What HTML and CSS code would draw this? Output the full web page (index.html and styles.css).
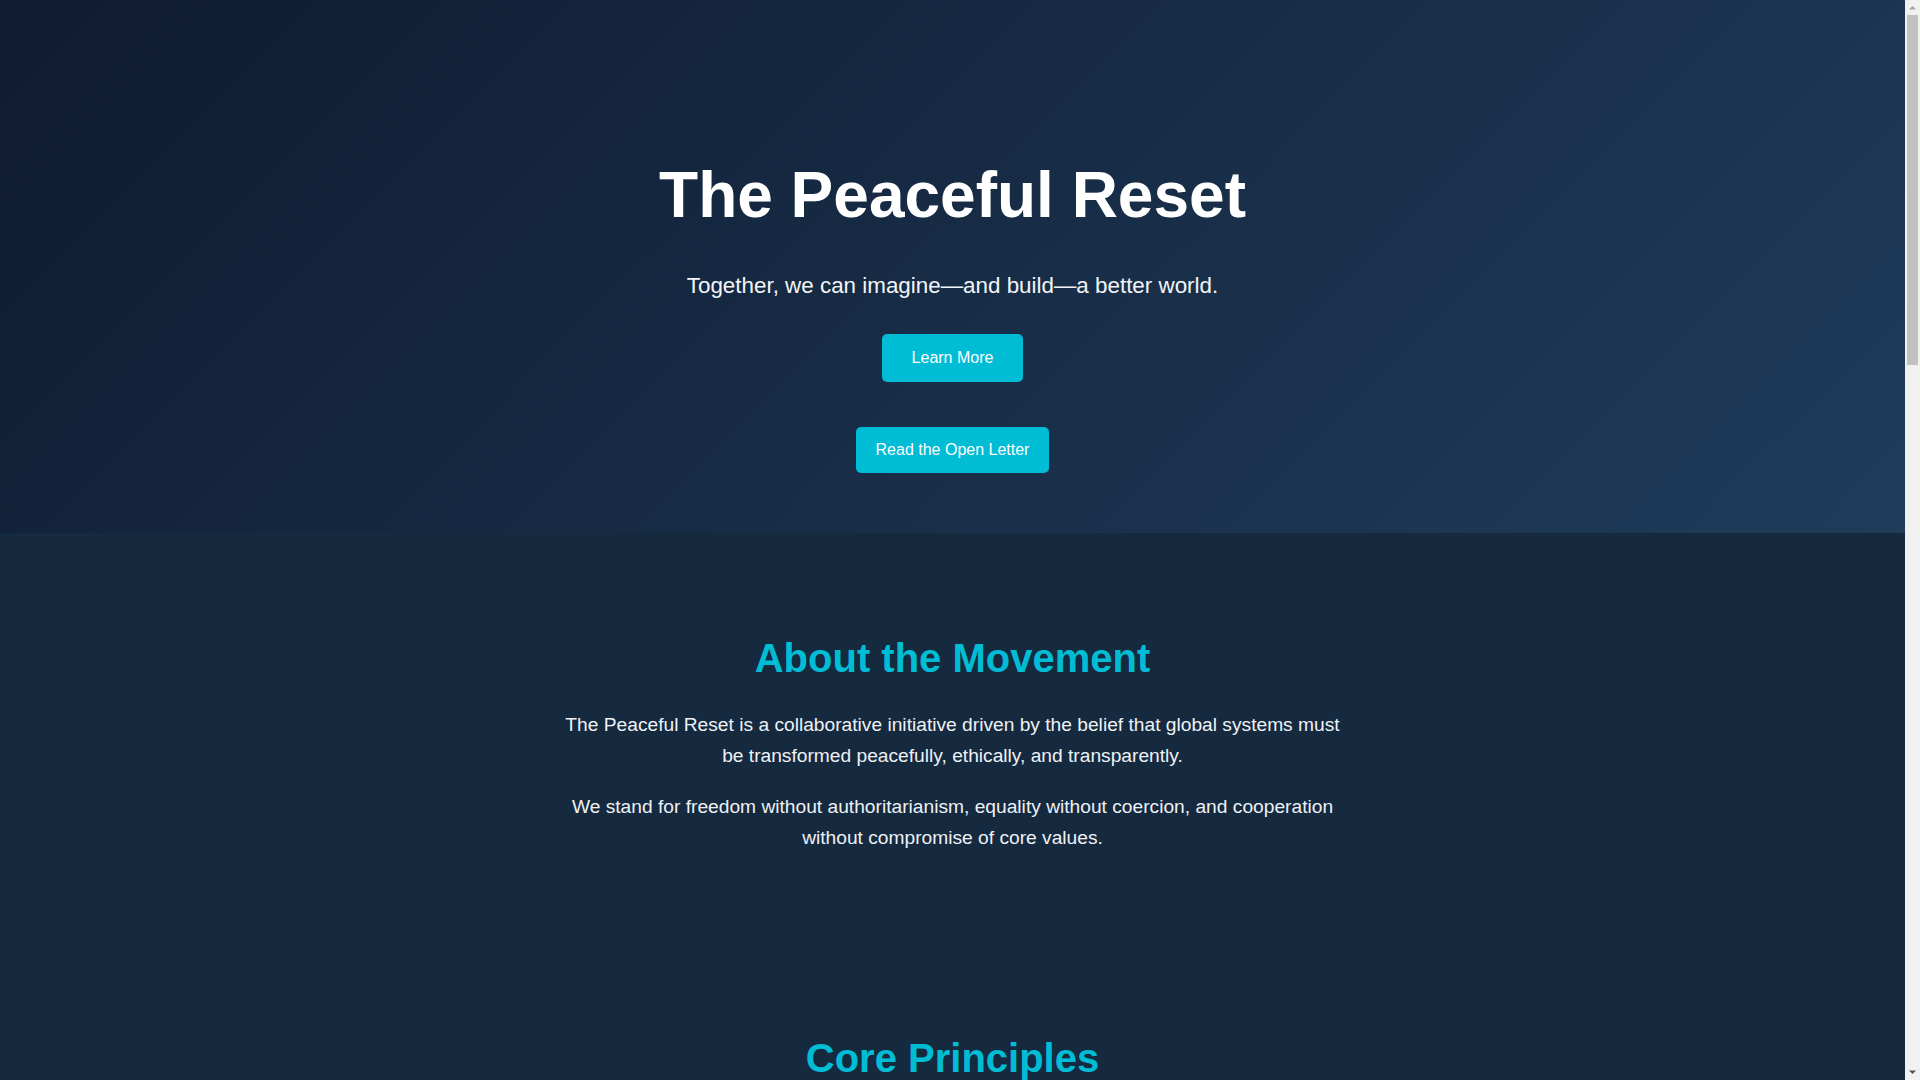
FILE: index.html
```html
<!DOCTYPE html>
<html lang="en">
<head>
<meta charset="utf-8">
<title>The Peaceful Reset</title>
<link rel="stylesheet" href="styles.css">
</head>
<body>
<div class="page">
<header class="hero">
  <h1 class="hero-title">The Peaceful Reset</h1>
  <p class="hero-sub">Together, we can imagine—and build—a better world.</p>
  <div class="hero-action"><a class="btn btn-lg" href="#about">Learn More</a></div>
  <div class="hero-action hero-action-second"><a class="btn" href="#letter">Read the Open Letter</a></div>
</header>

<section class="section" id="about">
  <h2 class="section-title">About the Movement</h2>
  <div class="section-body">
    <p>The Peaceful Reset is a collaborative initiative driven by the belief that global systems must be transformed peacefully, ethically, and transparently.</p>
    <p>We stand for freedom without authoritarianism, equality without coercion, and cooperation without compromise of core values.</p>
  </div>
</section>

<section class="section" id="principles">
  <h2 class="section-title">Core Principles</h2>
  <div class="cards">
    <div class="card"><h3>Nonviolence</h3><p>Change must come through dialogue, persuasion and example, never through force or intimidation.</p></div>
    <div class="card"><h3>Transparency</h3><p>Every decision, every plan and every resource is open to public scrutiny and honest debate.</p></div>
    <div class="card"><h3>Human Dignity</h3><p>Each person is owed respect, freedom of conscience and the right to shape their own future.</p></div>
    <div class="card"><h3>Shared Prosperity</h3><p>Economies should serve people and the planet, not the other way around.</p></div>
    <div class="card"><h3>Local Voice</h3><p>Communities know their needs best; global cooperation begins with local participation.</p></div>
    <div class="card"><h3>Stewardship</h3><p>We hold the earth in trust for generations who are not yet here to speak for themselves.</p></div>
  </div>
</section>

<section class="section" id="letter">
  <h2 class="section-title">The Open Letter</h2>
  <div class="section-body letter">
    <p>To the people of the world, and to those entrusted with power on their behalf:</p>
    <p>We write not in anger but in hope. The systems that govern our lives were built for another age, and many of them no longer serve the common good. We ask for a reset—not a rupture—guided by conscience, reason and mutual respect.</p>
    <p>We invite you to read, reflect, and add your name.</p>
  </div>
</section>

<footer class="footer">
  <p>© 2025 The Peaceful Reset. All rights reserved.</p>
</footer>
</div>

<div class="scrollbar" aria-hidden="true">
  <svg class="sb-button" viewBox="0 0 15 15" width="15" height="15"><path d="M4 9.5 L7.5 6 L11 9.5 Z" fill="#a3a3a3"/></svg>
  <div class="sb-track"><div class="sb-thumb"></div></div>
  <svg class="sb-button" viewBox="0 0 15 15" width="15" height="15"><path d="M4 5.5 L7.5 9 L11 5.5 Z" fill="#505050"/></svg>
</div>
</body>
</html>
```

FILE: styles.css
```css
html, body {
  margin: 0;
  padding: 0;
}

body {
  font-family: "Liberation Sans", Arial, sans-serif;
  background: #15293f;
  color: #e6e9ee;
}

.page {
  margin-right: 15px;
}

.hero {
  background: linear-gradient(135deg, #0f1b30 0%, #1f3c5b 100%);
  padding: 157px 20px 60px;
  text-align: center;
  color: #ffffff;
}

.hero-title {
  margin: 0;
  font-size: 64px;
  line-height: 1.2;
  font-weight: 700;
  color: #ffffff;
}

.hero-sub {
  margin: 36px 0 33px;
  font-size: 22.4px;
  line-height: 1.4;
  color: #f2f5f8;
}

.hero-action-second {
  margin-top: 45px;
}

.btn {
  display: inline-block;
  background: #00bcd4;
  color: #ffffff;
  font-family: inherit;
  font-size: 16px;
  line-height: 18px;
  padding: 14px 20px;
  border: none;
  border-radius: 5px;
  text-decoration: none;
  cursor: pointer;
}

.btn-lg {
  padding: 15px 30px;
}

.section {
  padding: 80px 20px;
  text-align: center;
}

.section-title {
  margin: 21px 0 27px;
  font-size: 40px;
  line-height: 1.2;
  font-weight: 700;
  color: #00bcd4;
}

.section-body {
  max-width: 790px;
  margin: 0 auto;
}

.section-body p {
  margin: 0 0 19.2px;
  font-size: 19.2px;
  line-height: 1.62;
  color: #eef1f5;
}

.section-body p:last-child {
  margin-bottom: 0;
}

.cards {
  max-width: 1100px;
  margin: 0 auto;
  display: grid;
  grid-template-columns: repeat(3, 1fr);
  gap: 32px;
}

.card {
  background: rgba(255, 255, 255, 0.05);
  border-radius: 8px;
  padding: 32px 28px;
  text-align: left;
}

.card h3 {
  margin: 0 0 12px;
  font-size: 22px;
  color: #00bcd4;
}

.card p {
  margin: 0;
  font-size: 16px;
  line-height: 1.7;
  color: #d8dee6;
}

.letter p {
  text-align: left;
}

.footer {
  background: #0f1b2d;
  padding: 40px 20px;
  text-align: center;
  font-size: 14px;
  color: #9fb0c4;
}

.footer p {
  margin: 0;
}

/* classic scrollbar as seen in the reference */
.scrollbar {
  position: fixed;
  top: 0;
  right: 0;
  width: 15px;
  height: 100vh;
  background: #f1f1f1;
  display: flex;
  flex-direction: column;
}

.sb-button {
  display: block;
  flex: 0 0 15px;
}

.sb-track {
  flex: 1;
  padding: 0 2px;
}

.sb-thumb {
  height: 350px;
  background: #c1c1c1;
}
```
